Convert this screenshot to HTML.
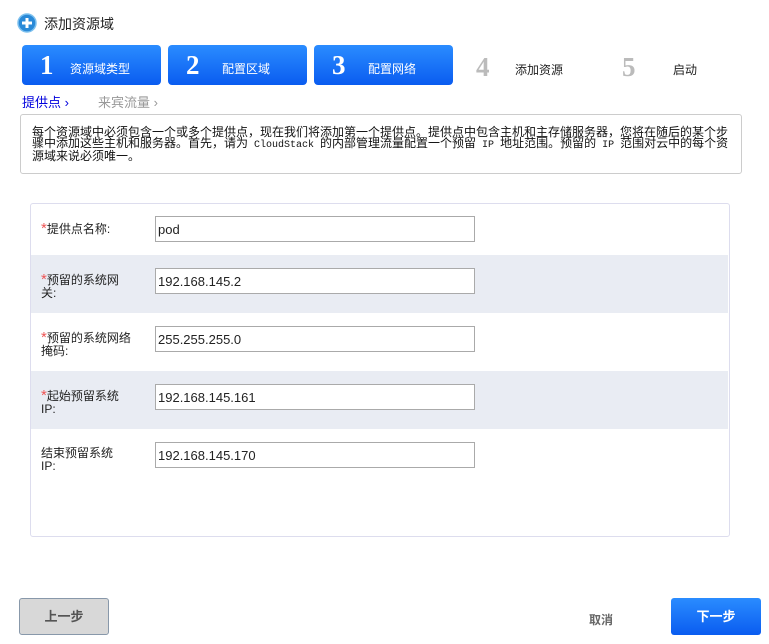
<!DOCTYPE html>
<html><head><meta charset="utf-8"><style>
*{margin:0;padding:0;box-sizing:border-box}
body{width:769px;height:644px;background:#fff;font-family:"Liberation Sans","Noto Sans CJK SC",sans-serif;font-size:12px;color:#222;position:relative;overflow:hidden}
.a{position:absolute}
.step{position:absolute;top:45px;height:40px;border-radius:4px;background:linear-gradient(#2a8cff,#0a5cf0);color:#fff}
.step .n{position:absolute;left:18px;top:5px;font-family:"Liberation Serif",serif;font-size:27px;font-weight:bold}
.step .t{position:absolute;left:48px;top:15px;font-size:12px}
.gn{position:absolute;top:52px;font-family:"Liberation Serif",serif;font-size:27px;font-weight:bold;color:#bbb}
.row{position:absolute;left:31px;width:697px}
.lbl{position:absolute;left:10px;font-size:12px;line-height:13px;width:90px}
.lbl b{color:#e55;font-weight:normal;font-size:15px}
.inp{position:absolute;left:124px;width:320px;height:26px;border:1px solid #aaa;background:#fff;font-size:13px;padding:5px 0 0 2px}
.m{font-family:"Liberation Mono",monospace;font-size:10px}
</style></head><body>
<svg class="a" style="left:17px;top:13px" width="20" height="20"><circle cx="10" cy="10" r="9" fill="#2a8ad8"/><circle cx="10" cy="10" r="9" fill="none" stroke="#7cc0ee" stroke-width="1.5"/><path d="M10 5v10M5 10h10" stroke="#fff" stroke-width="3"/></svg>
<div class="a" style="left:44px;top:14px;font-size:14px">添加资源域</div>
<div class="step" style="left:22px;width:139px"><span class="n">1</span><span class="t">资源域类型</span></div>
<div class="step" style="left:168px;width:139px"><span class="n">2</span><span class="t" style="left:54px">配置区域</span></div>
<div class="step" style="left:314px;width:139px"><span class="n">3</span><span class="t" style="left:54px">配置网络</span></div>
<span class="gn" style="left:476px">4</span><div class="a" style="left:515px;top:61px;font-size:12px">添加资源</div>
<span class="gn" style="left:622px">5</span><div class="a" style="left:673px;top:61px;font-size:12px">启动</div>
<div class="a" style="left:22px;top:92px;color:#0000dd;font-size:13px">提供点 ›</div>
<div class="a" style="left:98px;top:92px;color:#999;font-size:13px">来宾流量 ›</div>
<div class="a" style="left:20px;top:114px;width:722px;height:60px;border:1px solid #ccc;border-radius:3px;padding:12px 0 0 11px;font-family:'Liberation Sans','Noto Sans CJK SC',sans-serif;font-size:12px;line-height:11px;color:#111;white-space:nowrap">每个资源域中必须包含一个或多个提供点，现在我们将添加第一个提供点。提供点中包含主机和主存储服务器，您将在随后的某个步<br>骤中添加这些主机和服务器。首先，请为<span class="m"> CloudStack </span>的内部管理流量配置一个预留<span class="m"> IP </span>地址范围。预留的<span class="m"> IP </span>范围对云中的每个资<br>源域来说必须唯一。</div>
<div class="a" style="left:30px;top:203px;width:700px;height:334px;border:1px solid #dde;border-radius:3px"></div>
<div class="row" style="top:204px;height:51px"><div class="lbl" style="top:18px"><b>*</b>提供点名称:</div><div class="inp" style="top:12px">pod</div></div>
<div class="row" style="top:255px;height:58px;background:#e9ecf3"><div class="lbl" style="top:18px"><b>*</b>预留的系统网关:</div><div class="inp" style="top:13px">192.168.145.2</div></div>
<div class="row" style="top:313px;height:58px"><div class="lbl" style="top:18px"><b>*</b>预留的系统网络掩码:</div><div class="inp" style="top:13px">255.255.255.0</div></div>
<div class="row" style="top:371px;height:58px;background:#e9ecf3"><div class="lbl" style="top:18px"><b>*</b>起始预留系统IP:</div><div class="inp" style="top:13px">192.168.145.161</div></div>
<div class="row" style="top:429px;height:58px"><div class="lbl" style="top:18px;width:80px">结束预留系统IP:</div><div class="inp" style="top:13px">192.168.145.170</div></div>
<div class="a" style="left:19px;top:598px;width:90px;height:37px;background:#d8d8d8;border:1px solid #8898aa;border-radius:3px;text-align:center;line-height:35px;color:#555;font-weight:bold;font-size:13px">上一步</div>
<div class="a" style="left:589px;top:611px;color:#666;font-weight:bold;font-size:12px">取消</div>
<div class="a" style="left:671px;top:598px;width:90px;height:37px;background:linear-gradient(#2a8cff,#0a5cf0);border-radius:3px;text-align:center;line-height:37px;color:#fff;font-weight:bold;font-size:13px">下一步</div>
</body></html>
